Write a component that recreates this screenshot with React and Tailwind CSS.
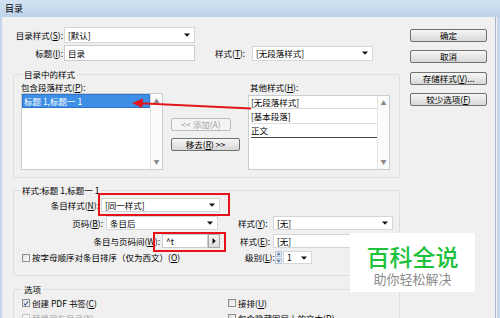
import React from "react";

const Caret = ({ dir = "down" }) => (
  <svg width="6" height="4" viewBox="0 0 6 4" className="shrink-0">
    {dir === "down" ? <path d="M0 0.5h6L3 3.8z" fill="#111" /> : <path d="M0 3.5h6L3 0.2z" fill="#111" />}
  </svg>
);

const Key = ({ k }) => (
  <>
    (<u className="underline underline-offset-1">{k}</u>)
  </>
);

const Dropdown = ({ w, h = "h-[15px]", children }) => (
  <div className={`${w} ${h} bg-white border border-[#d3d6da] flex items-center justify-between pl-[3px] pr-[4px]`}>
    <span>{children}</span>
    <Caret />
  </div>
);

const Button = ({ w = "w-[77px]", disabled, children }) => (
  <div
    className={`${w} h-[13px] rounded-[2px] border ${
      disabled ? "border-[#bdbdbd] text-[#a3a3a3] bg-[#f4f4f4]" : "border-[#707070] bg-linear-to-b from-[#f6f6f6] to-[#d8d8d8]"
    } flex items-center justify-center leading-[11px]`}
  >
    {children}
  </div>
);

const Check = ({ checked, disabled }) => (
  <div
    className={`w-[8px] h-[8px] shrink-0 border ${
      disabled ? "border-[#c6c6c6] bg-[#f4f4f4]" : "border-[#8e8f8f] bg-linear-to-br from-[#dcdcdc] to-[#ffffff]"
    } flex items-center justify-center`}
  >
    {checked && (
      <svg width="7" height="7" viewBox="0 0 7 7">
        <path d="M1 3.5l1.8 2L6 0.8" stroke="#2d4f8a" strokeWidth="1.2" fill="none" />
      </svg>
    )}
  </div>
);

const Group = ({ title, titleClass = "ml-[8px]", className, children }) => (
  <fieldset className={`border border-[#d5dfe5] rounded-[3px] ${className}`}>
    <legend className={`${titleClass} px-[2px] leading-[12px]`}>{title}</legend>
    {children}
  </fieldset>
);

const ScrollCol = () => (
  <div className="w-[12px] h-full border-l border-[#e4e4e4] bg-[#fbfbfb] flex flex-col items-center justify-between py-[4px]">
    <span className="text-[6px] leading-[6px] text-[#8a8a8a]">▲</span>
    <span className="text-[6px] leading-[6px] text-[#8a8a8a]">▼</span>
  </div>
);

export default function App() {
  return (
    <div className="relative w-[500px] h-[318px] overflow-hidden bg-[#f0f0f0] text-black text-[8.5px] leading-[11px] font-['Noto_Sans_CJK_SC','Microsoft_YaHei',sans-serif]">
      {/* title bar */}
      <div className="h-[17px] bg-linear-to-b from-[#d2e2f3] to-[#bdd3eb] pl-[5px] flex items-center text-[9px]">目录</div>

      <div className="flex h-[301px] border-l-[2px] border-r-[3px] border-[#c4d7ec]">
        {/* left column */}
        <div className="w-[398px] pl-[11px] pt-[10px]">
          <div className="flex items-center h-[16px]">
            <span className="w-[51px] text-right pr-[1px]">
              目录样式<Key k="S" />:
            </span>
            <Dropdown w="w-[131px]" h="h-[16px]">[默认]</Dropdown>
          </div>
          <div className="flex items-center h-[16px] mt-[2px]">
            <span className="w-[51px] text-right pr-[1px]">
              标题<Key k="I" />:
            </span>
            <div className="w-[131px] h-[16px] bg-white border border-[#c9cdd2] flex items-center pl-[3px]">目录</div>
            <span className="ml-[20px] w-[37px]">
              样式<Key k="T" />:
            </span>
            <Dropdown w="w-[121px]">[无段落样式]</Dropdown>
          </div>

          <Group title="目录中的样式" className="mt-[7px] h-[110px]">
            <div className="flex pt-[2px]">
              <div className="ml-[7px]">
                <div className="h-[11px]">
                  包含段落样式<Key k="P" />:
                </div>
                <div className="w-[142px] h-[77px] bg-white border border-[#c9cdd2] flex">
                  <div className="flex-1">
                    <div className="h-[14px] bg-[#3d8fe6] border border-[#2f74c8] text-white flex items-center pl-[1px]">
                      标题 1,标题一 1
                    </div>
                  </div>
                  <ScrollCol />
                </div>
              </div>
              <div className="ml-[8px] pt-[36px] flex flex-col gap-[7px]">
                <Button w="w-[60px]" disabled>
                  &lt;&lt; 添加(A)
                </Button>
                <Button w="w-[69px]">
                  移去<Key k="R" /> &gt;&gt;
                </Button>
              </div>
              <div className="ml-[8px]">
                <div className="h-[11px] pl-[2px]">
                  其他样式<Key k="H" />:
                </div>
                <div className="w-[142px] h-[75px] mt-[2px] bg-white border border-[#c9cdd2] flex">
                  <div className="flex-1 pl-[2px]">
                    <div className="h-[13px] border-b border-[#dedede] flex items-center">[无段落样式]</div>
                    <div className="h-[15px] border-b border-[#dedede] flex items-center">[基本段落]</div>
                    <div className="h-[14px] border-b border-[#444] flex items-center">正文</div>
                  </div>
                  <ScrollCol />
                </div>
              </div>
            </div>
          </Group>

          <Group title="样式:标题 1,标题一 1" titleClass="ml-[6px]" className="mt-[6px] h-[92px]">
            <div className="flex items-center h-[14px] mt-[2px]">
              <span className="w-[85px] text-right">
                条目样式<Key k="N" />:
              </span>
              <div className="ml-[2px]">
                <Dropdown w="w-[119px]" h="h-[14px]">[同一样式]</Dropdown>
              </div>
            </div>
            <div className="flex items-center h-[14px] mt-[4px]">
              <span className="w-[89px] text-right">
                页码<Key k="B" />:
              </span>
              <div className="ml-[3px]">
                <Dropdown w="w-[112px]" h="h-[14px]">条目后</Dropdown>
              </div>
              <span className="ml-[20px] w-[35px]">
                样式<Key k="Y" />:
              </span>
              <Dropdown w="w-[120px]" h="h-[14px]">[无]</Dropdown>
            </div>
            <div className="flex items-center h-[14px] mt-[4px]">
              <span className="w-[146px] text-right">
                条目与页码间<Key k="W" />:
              </span>
              <div className="ml-[2px] w-[46px] h-[14px] bg-white border border-[#c9cdd2] flex items-center pl-[3px]">^t</div>
              <div className="w-[12px] h-[14px] bg-linear-to-b from-[#f4f4f4] to-[#dcdcdc] border border-[#a8a8a8] flex items-center justify-center">
                <svg width="4" height="6" viewBox="0 0 4 6">
                  <path d="M0.5 0L3.8 3L0.5 6z" fill="#111" />
                </svg>
              </div>
              <span className="ml-[20px] w-[33px]">
                样式<Key k="E" />:
              </span>
              <Dropdown w="w-[120px]" h="h-[14px]">[无]</Dropdown>
            </div>
            <div className="flex items-center h-[13px] mt-[3px]">
              <div className="w-[231px] flex items-center pl-[8px] gap-[2px]">
                <Check />
                <span>
                  按字母顺序对条目排序（仅为西文）<Key k="O" />
                </span>
              </div>
              <span className="w-[30px]">
                级别<Key k="L" />:
              </span>
              <div className="w-[7px] h-[13px] flex flex-col gap-px">
                <div className="flex-1 border border-[#b7c7da] bg-[#eef3f9] flex items-center justify-center text-[4px] leading-[4px] text-[#5a7aa6]">▲</div>
                <div className="flex-1 border border-[#b7c7da] bg-[#eef3f9] flex items-center justify-center text-[4px] leading-[4px] text-[#5a7aa6]">▼</div>
              </div>
              <div className="ml-[1px]">
                <Dropdown w="w-[29px]" h="h-[13px]">1</Dropdown>
              </div>
            </div>
          </Group>

          <Group title="选项" className="mt-[7px] h-[60px]">
            <div className="flex items-center h-[12px] mt-[2px]">
              <div className="w-[214px] flex items-center pl-[8px] gap-[2px]">
                <Check checked />
                <span>
                  创建 PDF 书签<Key k="C" />
                </span>
              </div>
              <div className="flex items-center gap-[2px]">
                <Check />
                <span>
                  接排<Key k="U" />
                </span>
              </div>
            </div>
            <div className="flex items-center h-[12px] mt-[3px]">
              <div className="w-[214px] flex items-center pl-[8px] gap-[2px] text-[#a3a3a3]">
                <Check disabled />
                <span>替换现有目录(X)</span>
              </div>
              <div className="flex items-center gap-[2px]">
                <Check />
                <span>
                  包含隐藏图层上的文本<Key k="D" />
                </span>
              </div>
            </div>
          </Group>
        </div>

        {/* right column */}
        <div className="w-[96px] border-r border-[#a9b7c7] pl-[10px] pt-[12px] flex flex-col">
          <Button>确定</Button>
          <div className="mt-[8px]">
            <Button>取消</Button>
          </div>
          <div className="mt-[9px]">
            <Button>
              存储样式<Key k="V" />...
            </Button>
          </div>
          <div className="mt-[8px]">
            <Button>
              较少选项<Key k="F" />
            </Button>
          </div>
        </div>
      </div>

      {/* red annotations */}
      <svg className="absolute left-0 top-0 pointer-events-none" width="500" height="318">
        <line x1="251" y1="108.5" x2="140" y2="103.3" stroke="#e3161c" strokeWidth="2" />
        <path d="M132 103 L143 98.5 L142.5 108 z" fill="#e3161c" />
      </svg>
      <div className="absolute left-[98px] top-[193px] w-[132px] h-[23px] border-[2.5px] border-[#e5141b]" />
      <div className="absolute left-[153px] top-[232px] w-[73px] h-[20px] border-[2.5px] border-[#e5141b]" />

      {/* watermark */}
      <div className="absolute left-[350px] top-[233px] w-[125px] h-[59px] bg-white flex flex-col items-center pt-[10px]">
        <div className="text-[23px] leading-[26px] text-[#1cc13a] font-medium tracking-[0px]">百科全说</div>
        <div className="text-[13px] leading-[16px] text-[#8c8c8c] mt-[2px]">助你轻松解决</div>
      </div>
    </div>
  );
}
